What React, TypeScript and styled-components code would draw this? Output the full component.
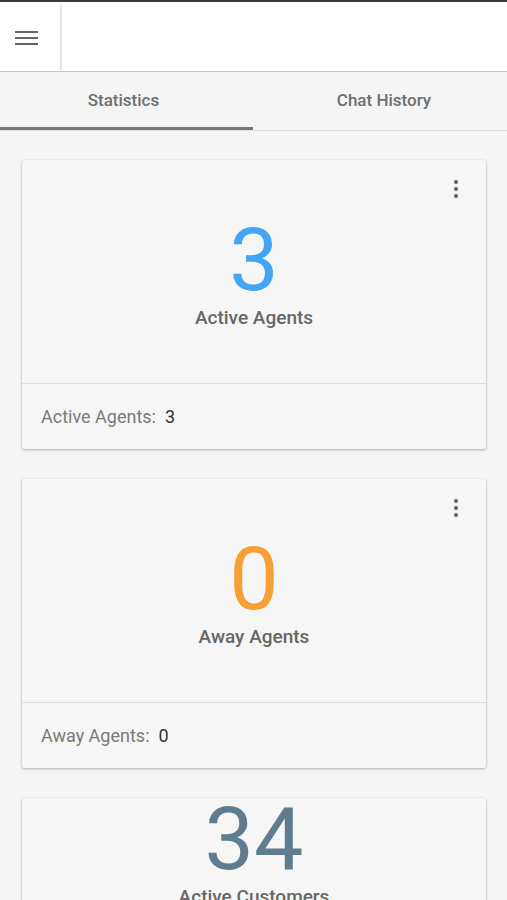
import styled, { createGlobalStyle } from "styled-components";

const GlobalStyle = createGlobalStyle`
  html, body {
    margin: 0;
    padding: 0;
    background: #f5f5f5;
    font-family: Roboto, "Liberation Sans", Arial, sans-serif;
  }
`;

const Page = styled.div`
  width: 507px;
  height: 900px;
  background: #f5f5f5;
  border-top: 2px solid #3a3a3a;
  overflow: hidden;
`;

const Header = styled.header`
  display: flex;
  height: 69px;
  background: #fff;
  border-bottom: 1.5px solid #c8c8c8;
`;

const MenuButton = styled.button`
  width: 62px;
  display: flex;
  align-items: center;
  justify-content: flex-start;
  padding: 0 0 0 15px;
  background: none;
  border: none;
  border-right: 2px solid #e6e6e6;
  margin-top: 2px;
`;

const Tabs = styled.nav`
  display: grid;
  grid-template-columns: 253px 1fr;
  border-bottom: 1px solid #dcdcdc;
`;

const Tab = styled.div<{ $active?: boolean; $shift: number }>`
  height: 54px;
  display: flex;
  align-items: center;
  justify-content: center;
  font-size: 17px;
  font-weight: 500;
  color: #6e6e6e;
  border-bottom: 3px solid ${(p) => (p.$active ? "#777" : "transparent")};
  padding-top: 1px;
  padding-left: ${(p) => (p.$shift > 0 ? p.$shift : 0)}px;
  padding-right: ${(p) => (p.$shift < 0 ? -p.$shift : 0)}px;
`;

const List = styled.main`
  display: flex;
  flex-direction: column;
  gap: 30px;
  padding: 29px 21px 0 22px;
`;

const Card = styled.section`
  position: relative;
  background: #f6f6f6;
  border-radius: 2px;
  box-shadow: 0 1px 3px rgba(0, 0, 0, 0.28), 0 0 1px rgba(0, 0, 0, 0.08);
`;

const Body = styled.div<{ $top: number }>`
  box-sizing: border-box;
  height: 224px;
  padding-top: ${(p) => p.$top}px;
  display: flex;
  flex-direction: column;
  align-items: center;
  border-bottom: 1px solid #dedede;
`;

const Value = styled.div<{ $color: string; $lift: number }>`
  margin-top: ${(p) => -p.$lift}px;
  font-size: 88px;
  line-height: 88px;
  font-weight: 400;
  color: ${(p) => p.$color};
`;

const Label = styled.div`
  margin-top: 2px;
  font-size: 19px;
  line-height: 24px;
  font-weight: 500;
  color: #666;
`;

const Footer = styled.div`
  height: 65px;
  display: flex;
  align-items: center;
  padding-left: 19px;
  font-size: 18px;
  color: #7a7a7a;
`;

const FooterValue = styled.span`
  margin-left: 9px;
  color: #333;
`;

const Kebab = styled.button`
  position: absolute;
  top: 17px;
  right: 22px;
  width: 16px;
  height: 24px;
  padding: 0;
  background: none;
  border: none;
  display: flex;
  flex-direction: column;
  align-items: center;
  justify-content: center;
  gap: 3px;
`;

const Dot = styled.span`
  width: 4px;
  height: 4px;
  border-radius: 50%;
  background: #606060;
`;

type Stat = {
  value: string;
  label: string;
  color: string;
  top: number;
  lift: number;
  menu: boolean;
};

const stats: Stat[] = [
  { value: "3", label: "Active Agents", color: "#42a5f5", top: 56, lift: 0, menu: true },
  { value: "0", label: "Away Agents", color: "#f7a036", top: 56, lift: 0, menu: true },
  { value: "34", label: "Active Customers", color: "#5f7d8e", top: 0, lift: 3, menu: false },
];

function Hamburger() {
  return (
    <svg width="24" height="16" viewBox="0 0 24 16">
      <rect x="0" y="1" width="23" height="2" fill="#666" />
      <rect x="0" y="7" width="23" height="2" fill="#666" />
      <rect x="0" y="13" width="23" height="2" fill="#666" />
    </svg>
  );
}

function StatCard({ stat }: { stat: Stat }) {
  return (
    <Card>
      {stat.menu ? (
        <Kebab>
          <Dot />
          <Dot />
          <Dot />
        </Kebab>
      ) : null}
      <Body $top={stat.top}>
        <Value $color={stat.color} $lift={stat.lift}>
          {stat.value}
        </Value>
        <Label>{stat.label}</Label>
      </Body>
      <Footer>
        {stat.label}:<FooterValue>{stat.value}</FooterValue>
      </Footer>
    </Card>
  );
}

export default function App() {
  return (
    <Page>
      <GlobalStyle />
      <Header>
        <MenuButton>
          <Hamburger />
        </MenuButton>
      </Header>
      <Tabs>
        <Tab $active $shift={-6}>
          Statistics
        </Tab>
        <Tab $shift={8}>Chat History</Tab>
      </Tabs>
      <List>
        {stats.map((s) => (
          <StatCard key={s.label} stat={s} />
        ))}
      </List>
    </Page>
  );
}
